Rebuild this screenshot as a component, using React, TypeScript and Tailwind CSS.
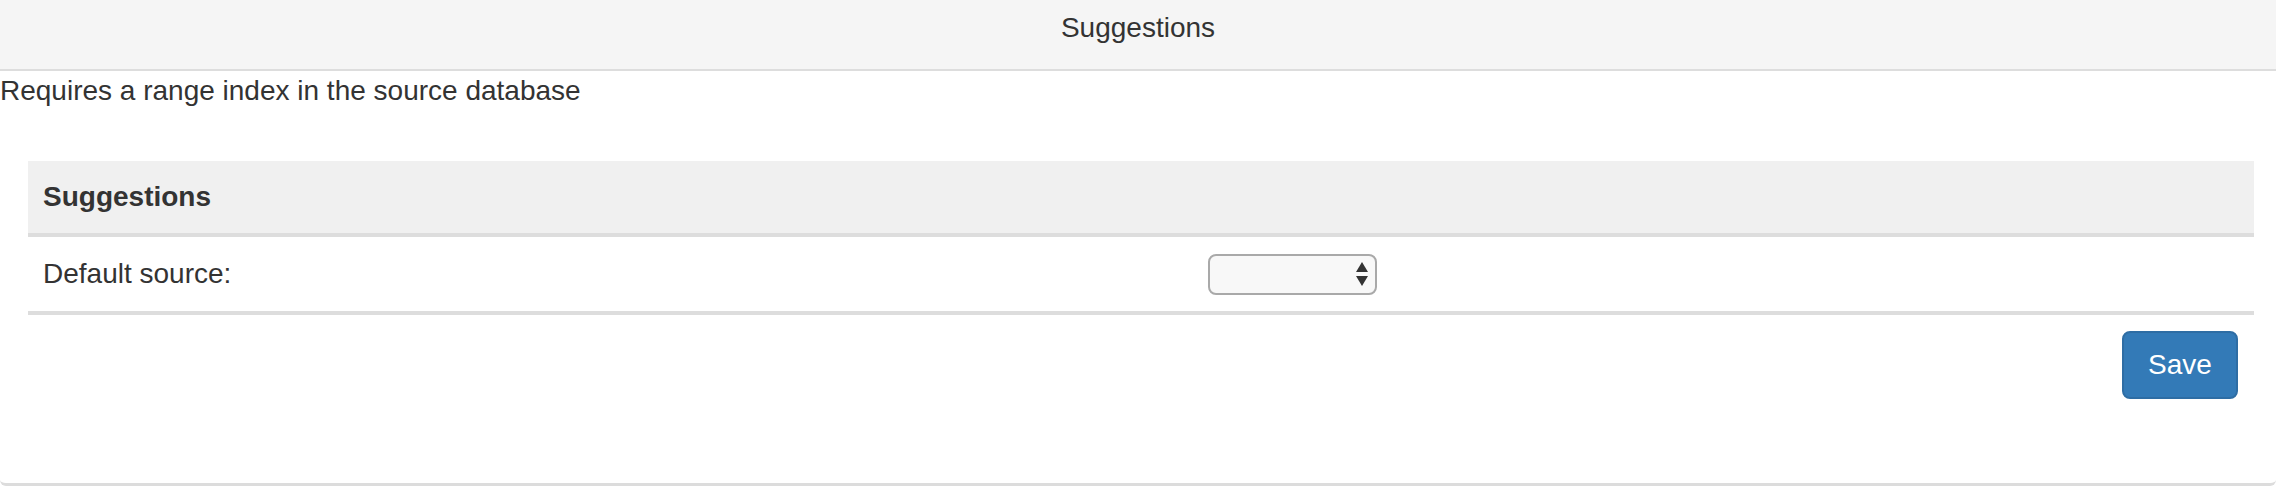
export default function App() {
  return (
    <div className="h-[503px] w-[2280px] overflow-hidden bg-white font-['Liberation_Sans',Arial,sans-serif] text-[28px] leading-[40px] text-[#333]">
      <div className="w-[2276px] rounded-b-[6px] border-b-[3px] border-[#dcdcdc] bg-white pb-[84px]">
        <div className="h-[71px] border-b-2 border-[#dddddd] bg-[#f5f5f5] pt-[8px] text-center">
          Suggestions
        </div>
        <p>Requires a range index in the source database</p>

        <div className="mx-[28px] mt-[50px] w-[2226px]">
          <div className="flex h-[76px] items-center border-b-4 border-[#dddddd] bg-[#f0f0f0] px-[15px] font-bold">
            Suggestions
          </div>
          <div className="flex h-[78px] items-center border-b-4 border-[#dddddd]">
            <div className="w-[1180px] pl-[15px]">Default source:</div>
            <div className="flex h-[41px] w-[169px] items-center justify-end rounded-[8px] border-2 border-[#a9a9a9] bg-[#f8f8f8] pr-[7px]">
              <svg width="12" height="24" viewBox="0 0 12 24">
                <path d="M6 0 L12 10 L0 10 Z" fill="#333" />
                <path d="M0 14 L12 14 L6 24 Z" fill="#333" />
              </svg>
            </div>
          </div>
          <div className="mt-[16px] flex justify-end pr-[16px]">
            <button className="h-[68px] w-[116px] rounded-[8px] border-2 border-[#2e6da4] bg-[#337ab7] text-[28px] text-white">
              Save
            </button>
          </div>
        </div>
      </div>
    </div>
  );
}
